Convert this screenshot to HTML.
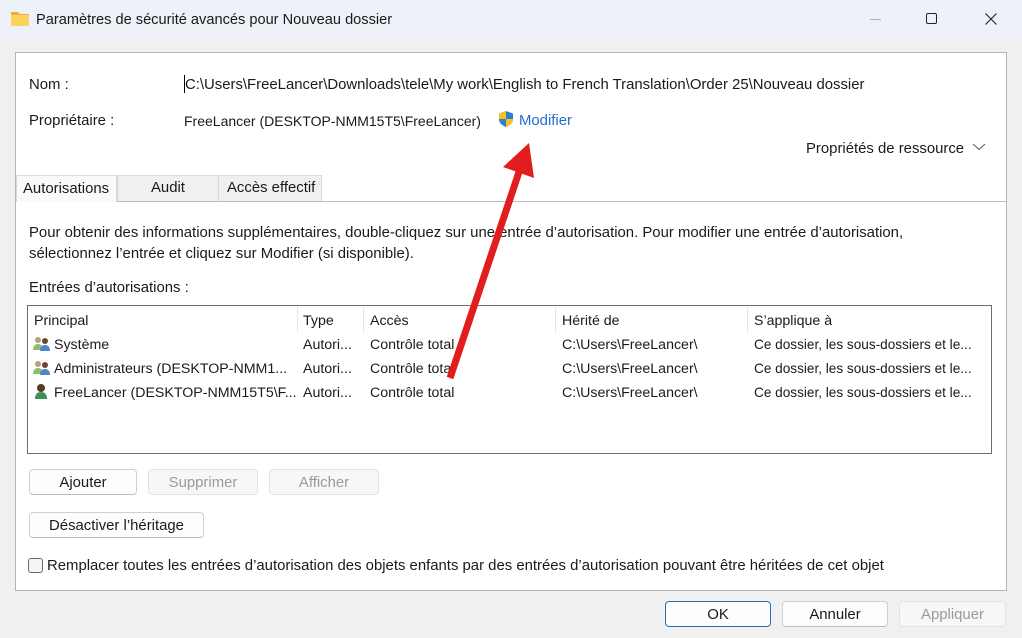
<!DOCTYPE html>
<html><head><meta charset="utf-8"><style>
*{box-sizing:border-box;margin:0;padding:0}
body{width:1022px;height:638px;overflow:hidden;background:#f0f0f0;font-family:"Liberation Sans",sans-serif;font-size:14.9px;color:#1a1a1a;position:relative}
.a{position:absolute;white-space:nowrap;line-height:20px;padding-top:1px}
.btn{position:absolute;height:26px;border:1px solid #cfcfcf;border-bottom-color:#bdbdbd;border-radius:4px;background:#fdfdfd;text-align:center;line-height:26px}
.dis{color:#9a9a9a;background:#f7f7f7;border-color:#e3e3e3}
.c{position:absolute;white-space:nowrap;overflow:hidden;line-height:20px;padding-top:1px;font-size:14.2px}
</style></head><body>
<div style="position:absolute;left:0;top:0;width:1022px;height:38px;background:#eff1f8"></div>
<svg style="position:absolute;left:11px;top:11px" width="18" height="15" viewBox="0 0 18 15"><path d="M0 1h7l2 2h9v12H0z" fill="#e8b33a"/><path d="M0 4h18v11H0z" fill="#fbd25a"/></svg>
<div class="a" style="left:36px;top:9px;font-size:14.6px">Paramètres de sécurité avancés pour Nouveau dossier</div>
<div style="position:absolute;left:870px;top:19px;width:11px;height:1px;background:#b0b0b0"></div>
<div style="position:absolute;left:926px;top:13px;width:11px;height:11px;border:1px solid #222;border-radius:2px"></div>
<svg style="position:absolute;left:985px;top:13px" width="12" height="12"><path d="M0.5 0.5L11.5 11.5M11.5 0.5L0.5 11.5" stroke="#222" stroke-width="1.1"/></svg>

<div style="position:absolute;left:15px;top:52px;width:992px;height:539px;background:#fff;border:1px solid #b5b5b5"></div>
<div class="a" style="left:29px;top:74px">Nom :</div>
<div style="position:absolute;left:184px;top:75px;width:1px;height:18px;background:#000"></div>
<div class="a" style="left:185px;top:74px">C:\Users\FreeLancer\Downloads\tele\My work\English to French Translation\Order 25\Nouveau dossier</div>
<div class="a" style="left:29px;top:110px">Propriétaire :</div>
<div class="a" style="left:184px;top:110px;font-size:14px">FreeLancer (DESKTOP-NMM15T5\FreeLancer)</div>
<svg style="position:absolute;left:497px;top:110px" width="18" height="18" viewBox="0 0 18 18"><path d="M9 1L16 3.5V9c0 4-3 6.5-7 8C5 15.5 2 13 2 9V3.5z" fill="#2d7fd6"/><path d="M9 1V9H2V3.5z" fill="#f6c21c"/><path d="M9 9h7c0 4-3 6.5-7 8z" fill="#f6c21c"/></svg>
<div class="a" style="left:519px;top:110px;color:#1f6fd1">Modifier</div>
<div class="a" style="left:806px;top:138px">Propriétés de ressource</div>
<svg style="position:absolute;left:972px;top:143px" width="14" height="8"><path d="M1 1l6 5.5L13 1" stroke="#555" fill="none"/></svg>

<div style="position:absolute;left:16px;top:201px;width:990px;height:1px;background:#bdbdbd"></div>
<div style="position:absolute;left:117px;top:175px;width:102px;height:26px;background:#f0f0f0;border:1px solid #d9d9d9;border-bottom:none"></div>
<div style="position:absolute;left:219px;top:175px;width:103px;height:26px;background:#f0f0f0;border:1px solid #d9d9d9;border-bottom:none;border-left:none"></div>
<div style="position:absolute;left:16px;top:175px;width:101px;height:27px;background:#fafafa;border:1px solid #d9d9d9;border-bottom:none"></div>
<div class="a" style="left:23px;top:178px">Autorisations</div>
<div class="a" style="left:151px;top:177px">Audit</div>
<div class="a" style="left:227px;top:177px">Accès effectif</div>

<div class="a" style="left:29px;top:222px">Pour obtenir des informations supplémentaires, double-cliquez sur une entrée d’autorisation. Pour modifier une entrée d’autorisation,</div>
<div class="a" style="left:29px;top:243px">sélectionnez l’entrée et cliquez sur Modifier (si disponible).</div>
<div class="a" style="left:29px;top:277px">Entrées d’autorisations :</div>

<div style="position:absolute;left:27px;top:305px;width:965px;height:149px;border:1px solid #6e6e6e;background:#fff"></div>
<div style="position:absolute;left:297px;top:307px;width:1px;height:25px;background:#e5e5e5"></div>
<div style="position:absolute;left:363px;top:307px;width:1px;height:25px;background:#e5e5e5"></div>
<div style="position:absolute;left:555px;top:307px;width:1px;height:25px;background:#e5e5e5"></div>
<div style="position:absolute;left:747px;top:307px;width:1px;height:25px;background:#e5e5e5"></div>
<div class="c" style="left:34px;top:310px">Principal</div>
<div class="c" style="left:303px;top:310px">Type</div>
<div class="c" style="left:370px;top:310px">Accès</div>
<div class="c" style="left:562px;top:310px">Hérité de</div>
<div class="c" style="left:754px;top:310px">S’applique à</div>

<svg style="position:absolute;left:33px;top:336px" width="18" height="16" viewBox="0 0 18 16"><circle cx="5" cy="4" r="3" fill="#b7a27a"/><path d="M0 14c0-4 2-6 5-6s5 2 5 6z" fill="#8fbf6a"/><circle cx="12" cy="5" r="3" fill="#6d4a2f"/><path d="M7 15c0-4 2-6 5-6s5 2 5 6z" fill="#4f86c6"/></svg>
<svg style="position:absolute;left:33px;top:360px" width="18" height="16" viewBox="0 0 18 16"><circle cx="5" cy="4" r="3" fill="#b7a27a"/><path d="M0 14c0-4 2-6 5-6s5 2 5 6z" fill="#8fbf6a"/><circle cx="12" cy="5" r="3" fill="#6d4a2f"/><path d="M7 15c0-4 2-6 5-6s5 2 5 6z" fill="#4f86c6"/></svg>
<svg style="position:absolute;left:34px;top:383px" width="14" height="17" viewBox="0 0 14 17"><circle cx="7" cy="5" r="4" fill="#5a3a22"/><path d="M1 16c0-5 2.5-7 6-7s6 2 6 7z" fill="#3f8f5a"/></svg>
<div class="c" style="left:54px;top:334px">Système</div>
<div class="c" style="left:54px;top:358px">Administrateurs (DESKTOP-NMM1...</div>
<div class="c" style="left:54px;top:382px">FreeLancer (DESKTOP-NMM15T5\F...</div>
<div class="c" style="left:303px;top:334px">Autori...</div>
<div class="c" style="left:303px;top:358px">Autori...</div>
<div class="c" style="left:303px;top:382px">Autori...</div>
<div class="c" style="left:370px;top:334px">Contrôle total</div>
<div class="c" style="left:370px;top:358px">Contrôle total</div>
<div class="c" style="left:370px;top:382px">Contrôle total</div>
<div class="c" style="left:562px;top:334px">C:\Users\FreeLancer\</div>
<div class="c" style="left:562px;top:358px">C:\Users\FreeLancer\</div>
<div class="c" style="left:562px;top:382px">C:\Users\FreeLancer\</div>
<div class="c" style="left:754px;top:334px;font-size:13.6px">Ce dossier, les sous-dossiers et le...</div>
<div class="c" style="left:754px;top:358px;font-size:13.6px">Ce dossier, les sous-dossiers et le...</div>
<div class="c" style="left:754px;top:382px;font-size:13.6px">Ce dossier, les sous-dossiers et le...</div>

<div class="btn" style="left:29px;top:469px;width:108px">Ajouter</div>
<div class="btn dis" style="left:148px;top:469px;width:110px">Supprimer</div>
<div class="btn dis" style="left:269px;top:469px;width:110px">Afficher</div>
<div class="btn" style="left:29px;top:512px;width:175px">Désactiver l’héritage</div>
<div style="position:absolute;left:28px;top:558px;width:15px;height:15px;border:1px solid #6a6a6a;border-radius:3px;background:#f5f5f5"></div>
<div class="a" style="left:47px;top:555px">Remplacer toutes les entrées d’autorisation des objets enfants par des entrées d’autorisation pouvant être héritées de cet objet</div>

<div class="btn" style="left:665px;top:601px;width:106px;border:1px solid #1f6fbf;background:#fdfdfd">OK</div>
<div class="btn" style="left:782px;top:601px;width:106px">Annuler</div>
<div class="btn dis" style="left:899px;top:601px;width:107px">Appliquer</div>

<svg style="position:absolute;left:0;top:0" width="1022" height="638"><path d="M450 378L519 172" stroke="#e21d1d" stroke-width="7"/><path d="M529 143L503 167L534 178z" fill="#e21d1d"/></svg>
</body></html>
